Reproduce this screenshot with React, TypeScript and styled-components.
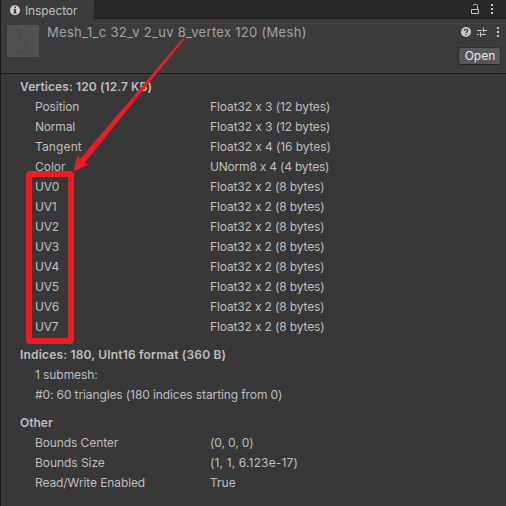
import React from 'react';
import styled, { createGlobalStyle } from 'styled-components';

const GlobalStyle = createGlobalStyle`
  * { box-sizing: border-box; }
  body { margin: 0; background: #383838; }
`;

const Panel = styled.div`
  position: relative;
  width: 506px;
  height: 506px;
  overflow: hidden;
  border-left: 1px solid #1b1b1b;
  background: #383838;
  color: #bebebe;
  font: 12px/20px Inter, 'Liberation Sans', sans-serif;
  font-feature-settings: 'calt' 0;
  white-space: nowrap;
`;

const TabBar = styled.div`
  display: flex;
  justify-content: space-between;
  height: 19px;
  background: #282828;
`;

const Tab = styled.div`
  display: flex;
  align-items: center;
  gap: 4px;
  width: 93px;
  height: 19px;
  padding: 2px 0 0 9px;
  border-radius: 3px 3px 0 0;
  background: #3c3c3c;
`;

const TabRest = styled.div`
  flex: 1;
  display: flex;
  justify-content: flex-end;
  gap: 10px;
  padding: 3px 12px 0 0;
  border-bottom: 1px solid #202020;
`;

const Header = styled.header`
  display: flex;
  height: 55px;
  padding: 6px 5px 0 6px;
  background: #3c3c3c;
  border-bottom: 1px solid #1a1a1a;
`;

const Thumb = styled.div`
  width: 32px;
  height: 32px;
  background: #515151;
`;

const Title = styled.div`
  flex: 1;
  margin: -3px 0 0 8px;
  color: #a2a2a2;
  font-size: 13px;
  letter-spacing: 0.3px;
`;

const Actions = styled.div`
  display: flex;
  flex-direction: column;
  align-items: flex-end;
`;

const IconRow = styled.div`
  display: grid;
  grid-template-columns: 11px 12px 4px;
  column-gap: 5px;
  height: 22px;
  padding: 1px 1px 0 0;

  & > :last-child {
    margin-left: 3px;
  }

  grid-template-columns: 11px 12px 7px;
`;

const OpenButton = styled.button`
  width: 43px;
  height: 18px;
  padding: 0 0 0 1px;
  border: 1px solid #303030;
  border-bottom-color: #242424;
  border-radius: 3px;
  background: #585858;
  color: #e8e8e8;
  font: 12px/16px Inter, sans-serif;
`;

const Body = styled.main`
  padding: 3px 0 0 19px;
`;

const Section = styled.section`
  margin-bottom: 8px;
`;

const Heading = styled.div<{ $spacing?: number }>`
  font-weight: 600;
  letter-spacing: ${(p) => p.$spacing ?? 0}px;
`;

const Row = styled.div`
  display: grid;
  grid-template-columns: 175px 1fr;
  padding-left: 15px;
`;

const Line = styled.div`
  padding-left: 15px;
`;

const Text = styled.span<{ $spacing?: number }>`
  letter-spacing: ${(p) => p.$spacing ?? 0}px;
`;

const Annotation = styled.svg`
  position: absolute;
  left: -1px;
  top: 0;
  pointer-events: none;
`;

type Entry = { name: string; value: string; nameSpacing?: number; valueSpacing?: number };

const attributes: Entry[] = [
  { name: 'Position', value: 'Float32 x 3 (12 bytes)', nameSpacing: -0.1, valueSpacing: -0.09 },
  { name: 'Normal', value: 'Float32 x 3 (12 bytes)', nameSpacing: -0.2, valueSpacing: -0.09 },
  { name: 'Tangent', value: 'Float32 x 4 (16 bytes)', nameSpacing: 0.12, valueSpacing: -0.09 },
  { name: 'Color', value: 'UNorm8 x 4 (4 bytes)', valueSpacing: -0.2 },
  ...Array.from({ length: 8 }, (_, i): Entry => ({
    name: `UV${i}`,
    value: 'Float32 x 2 (8 bytes)',
    nameSpacing: -0.2,
    valueSpacing: -0.14,
  })),
];

const other: Entry[] = [
  { name: 'Bounds Center', value: '(0, 0, 0)', nameSpacing: -0.1, valueSpacing: -0.1 },
  { name: 'Bounds Size', value: '(1, 1, 6.123e-17)', nameSpacing: -0.05, valueSpacing: 0.15 },
  { name: 'Read/Write Enabled', value: 'True', nameSpacing: -0.1 },
];

const InfoIcon = () => (
  <svg width="11" height="11" viewBox="0 0 11 11">
    <circle cx="5" cy="5.200" r="5" fill="#d0d0d0" />
    <path d="M4.200 1.800h1.800v1.500H4.200zM3.500 4.200H6v3.200h.8V8.600H3.400V7.400h.8V5.400H3.500z" fill="#333" />
  </svg>
);

const LockIcon = () => (
  <svg width="9" height="12" viewBox="0 0 9 12">
    <path d="M2.500 3V2.400Q2.500 1.500 3.400 1.500H5.600Q6.500 1.500 6.500 2.400V6" fill="none" stroke="#c4c4c4" />
    <path d="M.5 6.500H7.500V10.500H.5Z" fill="none" stroke="#c4c4c4" />
  </svg>
);

const MoreIcon = () => (
  <svg width="4" height="12" viewBox="0 0 4 12" fill="#c8c8c8">
    <rect x="1" y="1" width="2" height="2" />
    <rect x="1" y="5" width="2" height="2" />
    <rect x="1" y="9" width="2" height="2" />
  </svg>
);

const HelpIcon = () => (
  <svg width="11" height="12" viewBox="0 0 11 12">
    <circle cx="6" cy="6" r="5" fill="#c8c8c8" />
    <path d="M4.200 4.700Q4.300 3.300 6 3.300Q7.700 3.300 7.700 4.600Q7.700 5.400 6.800 5.900Q6 6.300 6 7.100" fill="none" stroke="#3c3c3c" strokeWidth="1.200" />
    <rect x="5.400" y="8" width="1.300" height="1.200" fill="#3c3c3c" />
  </svg>
);

const PresetIcon = () => (
  <svg width="12" height="12" viewBox="0 0 12 12" fill="none" stroke="#c8c8c8">
    <path d="M1 4.500H6M7.500 1.500V6.500M7.500 4.500H11M1 8.500H3M4.500 6V11M5 8.500H10" />
  </svg>
);

const EntryRow = ({ name, value, nameSpacing, valueSpacing = 0 }: Entry) => (
  <Row>
    <Text $spacing={nameSpacing}>{name}</Text>
    <Text $spacing={valueSpacing}>{value}</Text>
  </Row>
);

export default function App() {
  return (
    <>
      <GlobalStyle />
      <Panel>
        <TabBar>
          <Tab>
            <InfoIcon />
            <Text $spacing={-0.12}>Inspector</Text>
          </Tab>
          <TabRest>
            <LockIcon />
            <MoreIcon />
          </TabRest>
        </TabBar>
        <Header>
          <Thumb>
            <svg width="32" height="32" viewBox="0 0 32 32" fill="none" stroke="#3c3c3c" strokeWidth="0.8">
              <path d="M8 4.500L12 5" />
              <path d="M14 5.500L22 6.500M9.500 6L22 25M20 25.500L10 27.500" strokeDasharray="2 1.500" />
            </svg>
          </Thumb>
          <Title>Mesh_1_c 32_v 2_uv 8_vertex 120 (Mesh)</Title>
          <Actions>
            <IconRow>
              <HelpIcon />
              <PresetIcon />
              <MoreIcon />
            </IconRow>
            <OpenButton>Open</OpenButton>
          </Actions>
        </Header>
        <Body>
          <Section>
            <Heading $spacing={0.1}>Vertices: 120 (12.7 KB)</Heading>
            {attributes.map((entry) => (
              <EntryRow key={entry.name} {...entry} />
            ))}
          </Section>
          <Section>
            <Heading $spacing={0.18}>Indices: 180, UInt16 format (360 B)</Heading>
            <Line><Text $spacing={-0.08}>1 submesh:</Text></Line>
            <Line><Text $spacing={-0.11}>#0: 60 triangles (180 indices starting from 0)</Text></Line>
          </Section>
          <Section>
            <Heading>Other</Heading>
            {other.map((entry) => (
              <EntryRow key={entry.name} {...entry} />
            ))}
          </Section>
        </Body>
        <Annotation width="506" height="506" viewBox="0 0 506 506">
          <rect x="29" y="174" width="42" height="167" rx="1" fill="none" stroke="#ed1c24" strokeWidth="6" />
          <path d="M183 38L184.500 39L84.500 163L89 164.500L73.500 171.500L77.500 155L80 159Z" fill="#ed1c24" />
        </Annotation>
      </Panel>
    </>
  );
}
